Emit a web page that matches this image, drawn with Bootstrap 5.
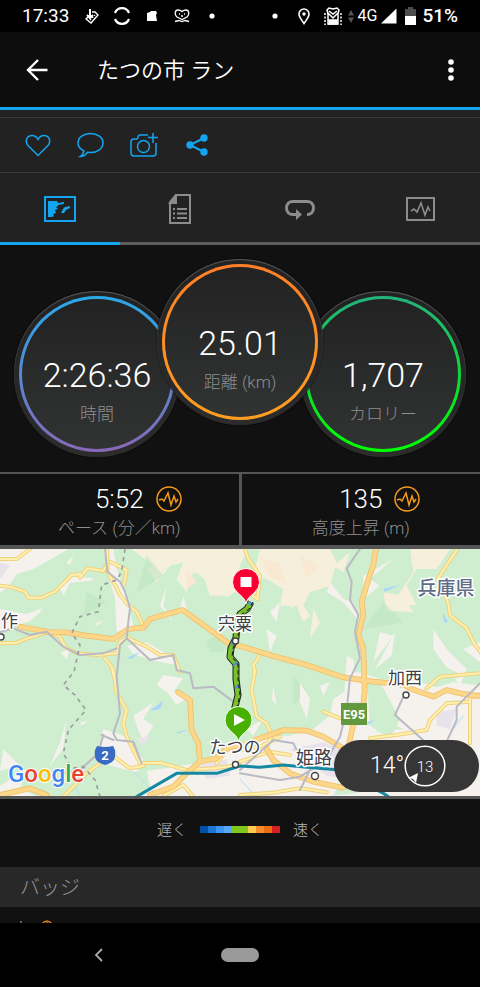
<!DOCTYPE html>
<html lang="ja">
<head>
<meta charset="utf-8">
<meta name="viewport" content="width=device-width, initial-scale=1">
<title>たつの市 ラン</title>
<link href="https://cdn.jsdelivr.net/npm/bootstrap@5.3.0/dist/css/bootstrap.min.css" rel="stylesheet">
<style>
body{background:#111;color:#fff;font-family:Roboto,"Noto Sans CJK JP",sans-serif;font-weight:300;line-height:24px}
svg{display:block;flex:none}
button{background:none;border:0;padding:0;color:inherit}
.status-bar{background:#000;height:32px;padding:0 22px;font-size:19px;font-weight:400}
.slot{width:29px;display:flex;justify-content:center}
.slots-left .slot{width:30px}
.net{font-size:16px;margin-right:4px;font-weight:400}
.pct{font-weight:500;margin-left:6px}
.app-bar{background:#0d0d0d;height:78px;border-bottom:3px solid #14a5f0;padding:0 15px 0 16px}
.back-btn{width:42px;height:42px;display:flex;align-items:center;justify-content:center}
.app-title{font-size:22px;font-weight:350;margin:0 0 0 39px;padding-top:2px;line-height:32px}
.more-btn{width:28px;height:42px;display:flex;align-items:center;justify-content:center}
.actions{background:#222;padding:7px 0 0}
.action-row{border-top:1px solid #3b3b3b;border-bottom:1px solid #3b3b3b;height:56px;padding-left:11px;color:#14a5f0}
.action-row button{width:53px;height:53px;display:flex;align-items:center;justify-content:center}
.tabs-strip{background:#222;color:#8c8c8c}
.tabs-strip a{height:72px;padding-top:3px;border-bottom:3px solid #5c5c5c;color:inherit;display:flex;align-items:center;justify-content:center}
.tabs-strip a.current{border-color:#14a5f0;color:#14a5f0}
.dials{padding:14px 0 15px}
.dial{width:166px;height:166px;padding:5px;border-radius:50%;background:linear-gradient(#222,#2c2c2c);box-shadow:inset 0 1px 1px #5a5a5a,0 0 2px #000;margin-top:32px}
.dial-mid{margin:0 -23px 32px;position:relative;z-index:1}
.dial-ring{height:100%;padding:3px;border-radius:50%}
.ring-time{background:linear-gradient(#2ba8e8,#5a86d0 55%,#8a68b8)}
.ring-dist{background:linear-gradient(#ff7f27,#ff9f20)}
.ring-cal{background:linear-gradient(#24b37c,#0be02c 60%,#0f0)}
.dial-core{height:100%;border-radius:50%;background:linear-gradient(#222,#313333);padding-top:57px}
.dial-value{font-size:34px;line-height:38px}
.caption-text{font-size:17px;color:#8e8e8e;line-height:24px}
.dial .caption-text{margin-top:8px}
.stats{border-top:2px solid #555;border-bottom:4px solid #555}
.stat{height:71px;padding-top:11px}
.stat+.stat{border-left:3px solid #555}
.stat-value{font-size:26px;line-height:28px}
.stat .caption-text{margin-top:3px}
.gap-side{gap:12px}
.half{flex:1 1 0}
.map-box{position:relative;border-bottom:3px solid #555}
.map-box>svg{width:100%;height:auto}
.map-text{font-family:"Noto Sans CJK JP",sans-serif;font-size:17px;font-weight:400;fill:#3d4046;stroke:#fff;stroke-width:3px;stroke-linejoin:round;paint-order:stroke}
.map-pref{font-size:19px;font-weight:500;fill:#5d6d88}
.map-city{font-size:18px}
.map-shield{font-family:Roboto,sans-serif;font-size:13px;font-weight:700;fill:#fff}
.map-logo{font-family:Roboto,sans-serif;font-size:24px;font-weight:500;stroke:#fff;stroke-width:2px;paint-order:stroke}
.weather{position:absolute;right:1px;bottom:4px;width:145px;height:52px;border-radius:26px;background:#363636;font-size:23px;padding-left:36px}
.wind{font-size:15px;fill:#fff}
.legend{height:68px;font-size:15px;color:#b8b8b8;gap:13px;padding-bottom:7px}
.scale-bar{width:80px;height:7px;background:linear-gradient(90deg,#0050a8 10%,#1c78d8 0 20%,#3c94f2 0 30%,#58a8ff 0 40%,#80c81e 0 60%,#fccc50 0 70%,#f98d2b 0 80%,#ee6b14 0 90%,#d62020 0)}
.badge-head{background:#282828;height:40px;color:#999;font-size:20px;line-height:38px;margin:0;padding:2px 0 0 20px;font-weight:300}
.badge-strip{height:16px;overflow:hidden;padding-left:19px}
.sys-nav{background:#000;height:64px}
.sys-back{width:40px;height:40px;display:flex;align-items:center;justify-content:center}
.home-pill{width:38px;height:14px;border-radius:7px;background:#999}
.third{flex:1 1 0}
</style>
<script src="https://cdn.jsdelivr.net/npm/bootstrap@5.3.0/dist/js/bootstrap.bundle.min.js"></script>
</head>
<body>
<div class="d-flex flex-column min-vh-100">
<div class="status-bar d-flex align-items-center">
  <span class="me-2">17:33</span>
  <div class="slots-left d-flex align-items-center">
  <span class="slot"><svg width="14" height="16" viewBox="0 0 14 16" fill="none" stroke="#fff" stroke-width="1.4"><path d="m4 8-3 3 5 4 7-8-3-3H7"/><path d="M5 1v8M2 7l3 3 3-3" stroke-width="2"/><path d="m5 12 5-5" stroke-dasharray="1.5 1.5"/></svg></span>
  <span class="slot"><svg width="18" height="18" viewBox="0 0 18 18" fill="none" stroke="#fff" stroke-width="2.2"><path d="M2 6a7.500 7.500 0 0 1 14 0M2 12a7.500 7.500 0 0 0 14 0"/></svg></span>
  <span class="slot"><svg width="12" height="12" viewBox="0 0 12 12" fill="#fff"><path d="M1 11V3l3-1 1-1h5l1 2-1 2 1 6z"/></svg></span>
  <span class="slot"><svg width="16" height="14" viewBox="0 0 16 14" fill="none" stroke="#fff" stroke-width="1.3"><path d="M8 10.500 3 8C0 5 1 1 4 1c2 0 3 .5 4 1.500C9 1.500 10 1 12 1c3 0 4 4 1 7zM1 12.500l4-1 3 1 3-1 4 1"/><path d="M5 5h1m4 0h1M7 7h2"/></svg></span>
  <span class="slot"><svg width="6" height="6"><circle cx="3" cy="3" r="2.6" fill="#fff"/></svg></span>
  </div>
  <span class="slot ms-auto"><svg width="6" height="6"><circle cx="3" cy="3" r="2.6" fill="#fff"/></svg></span>
  <span class="slot"><svg width="12" height="17" viewBox="0 0 12 17" fill="none" stroke="#fff" stroke-width="1.6"><path d="M6 15.500C3 11 1 9 1 6a5 5 0 0 1 10 0c0 3-2 5-5 9.500z"/><circle cx="6" cy="6" r="1.7" fill="#fff" stroke="none"/></svg></span>
  <span class="slot"><svg width="18" height="19" viewBox="0 0 18 19" fill="none" stroke="#fff" stroke-width="1.5"><path d="M4 17V7L3 3l2-2 4 1 4-1 2 2-1 4v10zM4 6l5 5 5-5M5 4l4 3 4-3"/><path d="M1 6v12M17 6v12" stroke-dasharray="2 1.5"/><path d="M5 13h8v4H5z" fill="#fff"/></svg></span>
  <svg width="6" height="13" viewBox="0 0 6 13" fill="#555"><path d="M0 5.500 3 0l3 5.500zM0 7.500h6L3 13z"/></svg>
  <span class="net ms-1">4G</span>
  <svg width="16" height="16" viewBox="0 0 16 16" fill="#fff"><path d="M0 15.500 15.500.5v15z"/></svg>
  <svg class="ms-2" width="11" height="18" viewBox="0 0 11 18"><path d="M0 2h3V0h5v2h3v7H0z" fill="#4c4c4c"/><path d="M0 9h11v9H0z" fill="#fff"/></svg>
  <span class="pct">51%</span>
</div>

<header class="app-bar d-flex align-items-center">
  <button class="back-btn" type="button" aria-label="戻る"><svg width="22" height="22" viewBox="0 0 22 22" fill="none" stroke="#fff" stroke-width="2.4"><path d="M21.500 11H2M12 1 2 11l10 10"/></svg></button>
  <h1 class="app-title">たつの市 ラン</h1>
  <button class="more-btn ms-auto" type="button" aria-label="メニュー"><svg width="6" height="22" viewBox="0 0 6 22" fill="#fff"><circle cx="3" cy="3" r="2.8"/><circle cx="3" cy="11" r="2.8"/><circle cx="3" cy="19" r="2.8"/></svg></button>
</header>

<div class="actions">
  <div class="action-row d-flex align-items-center">
    <button type="button" aria-label="いいね"><svg width="26" height="23" viewBox="0 0 26 23" fill="none" stroke="currentColor" stroke-width="1.5"><path d="M13 21.500 3 11.500C-.5 7 2 1.500 7 1.500c3 0 5 2 6 4 1-2 3-4 6-4 5 0 7.500 5.500 4 10z"/></svg></button>
    <button type="button" aria-label="コメント"><svg width="27" height="26" viewBox="0 0 27 26" fill="none" stroke="currentColor" stroke-width="1.5"><path d="M7 19C3 17 1 14 1 11 1 5.500 6.500 1.500 13.500 1.500S26 5.500 26 11s-5.500 9.500-12.500 9.500l-3-.2C8.500 23 6 24.500 3.500 24.500 6 23 6.500 21 7 19z"/></svg></button>
    <button type="button" aria-label="写真を追加"><svg width="28" height="26" viewBox="0 0 28 26" fill="none" stroke="currentColor" stroke-width="1.5"><path d="M18 3H9C8 3 8 7 7 7H4C2 7 1 8 1 10v11c0 2 1 3 3 3h19c2 0 3-1 3-3V11M23 1v10M18 5.500h10"/><circle cx="13.500" cy="14.500" r="6"/></svg></button>
    <button type="button" aria-label="共有"><svg width="22" height="22" viewBox="0 0 22 22" fill="currentColor"><path d="M18 4 4 11l14 7" fill="none" stroke="currentColor" stroke-width="2"/><circle cx="4" cy="11" r="3.7"/><circle cx="18" cy="4" r="3.7"/><circle cx="18" cy="18" r="3.7"/></svg></button>
  </div>
</div>

<nav class="tabs-strip row g-0">
  <a class="col current" href="#map" aria-label="マップ"><svg width="32" height="26" viewBox="0 0 32 26" fill="currentColor"><path d="M1 1h30v24H1z" fill="none" stroke="currentColor" stroke-width="2"/><path d="M4 5h9l1 2 6-1v2l-6 1v1l-2 1 2 2-3 1 1 3-3 1 1 2-2 1H4zM17 17l2-4 2-2 5-1v2l-4 2-2 3z"/></svg></a>
  <a class="col" href="#detail" aria-label="詳細"><svg width="24" height="31" viewBox="0 0 24 31" fill="none" stroke="currentColor" stroke-width="2"><path d="M8 1h14v28H2V8z"/><path d="M8 1v8H2z" fill="currentColor"/><path d="M9 15h10M9 19.500h10M9 24h10M5 15h2M5 19.500h2M5 24h2"/></svg></a>
  <a class="col" href="#laps" aria-label="ラップ"><svg width="30" height="21" viewBox="0 0 30 21" fill="none" stroke="currentColor" stroke-width="3"><path d="M22 15.500c4 0 6.500-2.500 6.500-6.500S26 2.500 22 2.500H8C4 2.500 1.500 5 1.500 9S4 15.500 8 15.500h4"/><path d="m11 10 6 5.500-6 5.500z" fill="currentColor" stroke="none"/></svg></a>
  <a class="col" href="#graph" aria-label="グラフ"><svg width="29" height="24" viewBox="0 0 29 24" fill="none" stroke="currentColor" stroke-width="1.6"><path d="M1 1h27v22H1z" stroke-width="2"/><path d="m5 14 3-2 3 3 4-9 4 12 3-8 2 4"/></svg></a>
</nav>

<main class="flex-grow-1">
<section class="dials d-flex justify-content-center text-center">
  <div class="dial"><div class="dial-ring ring-time"><div class="dial-core"><div class="dial-value">2:26:36</div><div class="caption-text">時間</div></div></div></div>
  <div class="dial dial-mid mt-0"><div class="dial-ring ring-dist"><div class="dial-core"><div class="dial-value">25.01</div><div class="caption-text">距離 (km)</div></div></div></div>
  <div class="dial"><div class="dial-ring ring-cal"><div class="dial-core"><div class="dial-value">1,707</div><div class="caption-text">カロリー</div></div></div></div>
</section>

<section class="stats row g-0 text-center">
  <div class="stat col">
    <div class="d-flex align-items-center gap-side"><span class="half"></span><span class="stat-value">5:52</span><span class="half"><svg width="26" height="26" viewBox="0 0 26 26" fill="none" stroke="#f59a1b" stroke-width="1.5"><circle cx="13" cy="13" r="12"/><path d="m3 14 3-1 2 2 4-8 3 12 3-9 2 6 2-3"/></svg></span></div>
    <div class="caption-text">ペース (分／km)</div>
  </div>
  <div class="stat col">
    <div class="d-flex align-items-center gap-side"><span class="half"></span><span class="stat-value">135</span><span class="half"><svg width="26" height="26" viewBox="0 0 26 26" fill="none" stroke="#f59a1b" stroke-width="1.5"><circle cx="13" cy="13" r="12"/><path d="m3 14 3-1 2 2 4-8 3 12 3-9 2 6 2-3"/></svg></span></div>
    <div class="caption-text">高度上昇 (m)</div>
  </div>
</section>

<section class="map-box">
<svg viewBox="0 0 480 247" role="img" aria-label="ルートマップ">
  <defs>
    <g id="minor">
      <g transform="translate(0 -12)"><path d="M0 42h50l40-30M0 122l30 3 45 15 10 18h40l40-18 50-50 25-2v10l22-28 48 8 10-20M322 12v68l23 40 15 30 25 30 25 20 20 45M330 50l50 25-8 45M0 295l50-2 40-15 50-16 40 13 15 30 35 20 60 5 60-5 10-35 25-15M385 280l55 25 40 25h40l20 50M315 340l20 25 5 25"/></g>
      <g transform="translate(720 -12)"><path d="m15 12 10 30 35 50-8 70-20-15M652 12l-58 88 31 75 5 35 50 40 25 50 20 25M60 330l-20 30 5 25"/></g>
      <g transform="translate(0 363)"><path d="m340 0 10 70 30 50-10 40 10 40 20 40 20 40 60-2 80 22 80-5 80-10M330 250l60 45 40-7M300 280l-40 30-70 70M490 378l60-33 30 35M650 280l30-40 50-20"/></g>
      <g transform="translate(720 363)"><path d="m45 0-10 60 15 80 30 20 15 35-15 40 20 40M250 125l50 20M390 205l80-10 90-15 10-30 50-50 70-5M720 80h-30v140M0 275l90-30 60 10M0 375l100-7 80-13 80 12M560 55l40-35 120-10M0 240l60-10 60-30"/></g>
    </g>
    <g id="major">
      <path d="m60 233 90 17h50l60 10 80 10 45-30 45-4 20-26 60-17 38-10 62 45 80 58 30 5 100 30 100 27 110 37 90 13 90 8 20 12 70 25 40-20 40 10 50 7h70"/>
      <path d="m1128 0-8 48-20 60-15 50 5 40-15 60 15 40 4 130-9 78-25 20-20 90 10 20"/>
      <path d="m535 430 35 23 5 90 20 40 5 55-40 35-40 40-70 25M600 638l50-10 30-30 40-10M0 738l90-20 50 20M765 573l45-15 40-15 70 2 50 18 60 35M800 600l20 33 50 40 70 25 90 18"/>
    </g>
    <g id="rail">
      <path d="m315 0 7 68 38 30 15 30 15 50-5 40-5 50-20 20-10 95 10 110-20 60 10 20 50 5 25 65M0 250l40-12 50 20 50-10 50 45 50 25 70-5 40-15M380 268l70 65 70-15 10 45 40 10 10 45 60-5 60 45M310 558l-15 55-55 50-50 10M340 573l-35-15M1080 0l-40 58 15 40-5 55 25 45-10 50 15 80-30 60-10 95-20 80-40 70-80 50-60 10-120-20M1210 443l-25 55 95 85M1440 403l-70 70v40l-30 65M720 663l100-90 60 10 20 40M900 723l30-60"/>
    </g>
  </defs>
  <path d="M0 0h480v247H0z" fill="#ceeecf"/>
  <g transform="scale(.33333)">
    <g fill="#f5f1ed">
      <path d="M0 0h205l-50 30-55 30-50 15-25 40-25 15zM0 180l80 15 50-18-40 40-50 15-40 20zM200 40l20-20-10 30zM180 118l35-35 70 5-15 8-60 5-20 40zM310 0h30l10 60 30 90 20 80-50 20-5-100-25-90zM380 290l60-10 70 40 30 30-80-15-60-20zM500 110l-20 60 40 50-30-50zM550 140l10 40-25 20zM180 310l30-10-10 30zM110 180l15 5-15 15zM290 220l20-5-25 20zM340 110l30 10-10 20z"/>
      <path d="m490 378 60 10-30 40 40 20-30 20-30-40-30-20zM400 500l60-40-30 50 30 20-30 50-20-50zM10 600l50 50-60 15zM150 650l30-70 20-70-10 90zM240 520l25-5-20 15zM310 540l60 20 60 70-20 40-80-20-30-50zM440 665l40-5 130-20 110-60v163H400l50-30zM460 680l50 30-30 20zM0 710l80-50-20 60 70 30H0z"/>
      <path d="m990 100 40 50 30 10 20 60-50-60-50-30zM1090 80l90-50-70 60 30 20-50 40zM1180 260l-60 80 20-90zM1185 250l-60 110 50-40zM1300 240l40 60 60 60-20 50-80-110zM1390 300l50-20v60zM800 240l30 20-20 50zM810 190l30-30-10 60zM1040 320l20 10 10 110-40 40z"/>
      <path d="m1040 370 40 0 60 20 120 10 50 15 50-15 80 10v333H720V590l50-30 100 0 70-20 50-40 10-50 60-40z"/>
    </g>
    <g fill="#f6efdc">
      <path d="m395 0 350 0-25 50-30 90-60 0-20-60-30-10-20 60-30-40 20-50-40 10-40 50-30-40 20-10zM780 0h210l20 40-20 70-60 20-20 40 20 30-20 20-20-50-50 0 10-50-50-30-40-10zM1230 0h120l-40 60-60 0-30 50 30 60-70-10 60-90zM600 80l60-15 50 60-30 20zM1000 50l50-40-20 60zM1150 130l60 10 30 50-80-5zM940 180l20 40-30 50zM860 120l20 60-40-30z"/>
      <path d="m780 25 60 20 20 60-50-20zM900 20l60 30-40 40zM560 60l30 40-30 20z" fill="#f9e9d3"/>
    </g>
    <g fill="#bfe4c2"><path d="m440 20 50 60-80 50zM620 272l40-10 20 20-10 30-40-5zM1150 160l60 60-120 20zM880 380l40 40-40 50zM260 130l60 30-70 40z" opacity=".6"/></g>
    <g fill="#ceeecf"><path d="m1100 390 40 10 60 110-30 60-60-40zM1180 390l70-10-50 40zM1140 510l70 30-80 10zM1000 740l20-40 60 30zM1270 380l60-30 60 30-60 20z"/></g>
    <g fill="#f5f1ed"><path d="m900 400 30 50-10 60-20-50zM820 410l10 60-15-20zM960 410l30-10-20 40zM740 540l50-30-30 50z"/></g>
    <g fill="#e8e3ea"><path d="m1310 490 60-10-20 60-40-10zM870 600l100-20 100 40 20 80-110-20zM600 650l80-20 10 50-70 10zM0 40l30 10-30 40zM1050 460l30-5-20 60zM410 570l40-10-20 30z"/></g>
    <g fill="#a8d5fb"><path d="m450 485 40-30-10 25zM1150 120l50-12-45 20zM1328 190l16 30-12 0zM1100 520l25-8-20 15zM380 328l40-20-25 22zM530 550l35-8-30 12z"/><path d="m720 690 45 50M400 668l60 60M225 715l20 30M1360 540l30-40" fill="none" stroke="#b4dbfb" stroke-width="3"/></g>
    <g fill="none" stroke-linejoin="round" stroke-linecap="round">
      <use href="#minor" stroke="#efd27c" stroke-width="12"/><use href="#minor" stroke="#fff0b0" stroke-width="6"/>
      <use href="#major" stroke="#f0bf69" stroke-width="17"/><use href="#major" stroke="#fcd78a" stroke-width="12"/>
      <use href="#rail" stroke="#b9bac3" stroke-width="6"/>
      <path d="m375 0-10 68-15 25-45 15-10 80-55 15-25 50 25 35-18 80-32 40 35 30 33 45-53 60-15 70 25 45 35-5 35 40 15 50" stroke="#9b9ba0" stroke-width="5" stroke-dasharray="12 13" stroke-linecap="butt"/>
      <path d="m410 743 120-70h120l70-22 60 4 70-7 70 7 100 8 130 70 30 20" stroke="#1689a0" stroke-width="9"/>
    </g>
  </g>
  <g fill="none" stroke-linejoin="round">
    <path d="m251 53-4 7-7 5-3 9-1 15-5 10-1 9 6 7v15l2 16-3 12 1 12" stroke="#222" stroke-width="7"/>
    <path d="m251 53-4 7-7 5-3 9-1 15-5 10-1 9 6 7v15l2 16-3 12 1 12" stroke="#79c02b" stroke-width="5"/>
    <path d="m251 53-4 7-7 5-3 9-1 15-5 10-1 9 6 7v15l2 16-3 12 1 12" stroke="#4f91d8" stroke-width="4" stroke-dasharray="3 20"/>
    <path d="m253 53-4 7-7 5-3 9-1 15-5 10-1 9 6 7v15l2 16-3 12 1 12" stroke="#111" stroke-width="1" stroke-dasharray="4 3"/>
  </g>
  <g fill="#fff" stroke="#444" stroke-width="1.4"><circle cx="235.500" cy="92" r="3"/><circle cx="235.500" cy="215.500" r="3"/><circle cx="315" cy="227" r="3.500"/><circle cx="406" cy="146" r="3"/><circle cx="1" cy="88" r="3"/></g>
  <path d="M341 154h26v22h-26z" fill="#62993e"/>
  <text class="map-shield" x="354" y="170" text-anchor="middle">E95</text>
  <path d="M97 197q8 2 16 0l2 4q1 8-2 11-3 3-8 4-5-1-8-4-3-3-2-11z" fill="#386cc4"/>
  <text class="map-shield" x="105" y="211" text-anchor="middle">2</text>
  <g class="map-text">
    <text x="1" y="78">作</text>
    <text x="235" y="81" text-anchor="middle">宍粟</text>
    <text x="405" y="135" text-anchor="middle">加西</text>
    <text x="235" y="204" text-anchor="middle">たつの</text>
    <text class="map-city" x="314" y="215" text-anchor="middle">姫路</text>
    <text class="map-pref" x="446" y="46" text-anchor="middle">兵庫県</text>
  </g>
  <path d="M246 55c-1-6-5-8-9-12a13.500 13.500 0 1 1 18 0c-4 4-8 6-9 12z" fill="#fa0032" stroke="#fff" stroke-width="1"/><path d="M240.500 28h11v10h-11z" fill="#fff"/>
  <path d="M238.500 193c-1-6-5-8-9-12a13.500 13.500 0 1 1 18 0c-4 4-8 6-9 12z" fill="#47b000" stroke="#fff" stroke-width="1"/><path d="m234 165 11 6-11 6z" fill="#fff"/>
  <text class="map-logo" x="8" y="233"><tspan fill="#4285f4">G</tspan><tspan fill="#ea4335">o</tspan><tspan fill="#fbbc05">o</tspan><tspan fill="#4285f4">g</tspan><tspan fill="#34a853">l</tspan><tspan fill="#ea4335">e</tspan></text>
</svg>
<div class="weather d-flex align-items-center"><span>14°</span>
  <svg width="42" height="42" viewBox="0 0 42 42"><circle cx="21" cy="21" r="19.800" fill="none" stroke="#fff" stroke-width="1.5"/><path d="m4 33 10-5-2 10-3-4z" fill="#fff"/><text class="wind" x="21" y="27" text-anchor="middle">13</text></svg>
</div>
</section>

<div class="legend d-flex align-items-center justify-content-center"><span>遅く</span><span class="scale-bar"></span><span>速く</span></div>
<h2 class="badge-head">バッジ</h2>
<div class="badge-strip"><svg width="50" height="26" viewBox="0 0 50 26" fill="none" stroke="#f08a1d" stroke-width="1.3"><path d="m23 17 2-2 3-1 3 1 2 2M25 17l3-1 3 1"/><path d="M1 15h2" stroke="#688"/></svg></div>
</main>

<nav class="sys-nav d-flex align-items-center">
  <div class="third d-flex justify-content-center"><button class="sys-back me-4" type="button" aria-label="戻る"><svg width="9" height="14" viewBox="0 0 9 14" fill="none" stroke="#aaa" stroke-width="1.8"><path d="M8 1 2 7l6 6"/></svg></button></div>
  <button class="home-pill" type="button" aria-label="ホーム"></button>
  <div class="third"></div>
</nav>
</div>
</body>
</html>
